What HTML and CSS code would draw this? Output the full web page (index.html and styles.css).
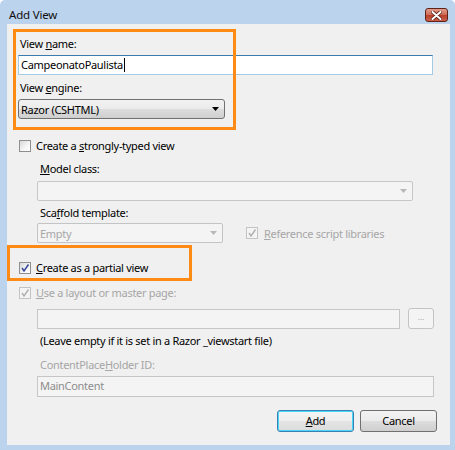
FILE: index.html
```html
<!DOCTYPE html>
<html>
<head>
<meta charset="utf-8">
<link rel="stylesheet" href="styles.css">
</head>
<body>
<div class="window">
  <div class="titlebar">
    <span class="title">Add View</span>
    <span class="close"><svg width="11" height="9" viewBox="0 0 11 9"><path d="M1.5 1 L9.5 8 M9.5 1 L1.5 8" stroke="#5a1d12" stroke-width="3.6" stroke-linecap="round"/><path d="M1.5 1 L9.5 8 M9.5 1 L1.5 8" stroke="#fff" stroke-width="2" stroke-linecap="round"/></svg></span>
  </div>
  <div class="client">
    <div class="label">View <u>n</u>ame:</div>
    <div class="textbox focused name mt4">CampeonatoPaulista<span class="caret"></span></div>
    <div class="label mt5">View <u>e</u>ngine:</div>
    <div class="dropdown engine mt4"><span>Razor (CSHTML)</span><svg class="arrow" width="7" height="4" viewBox="0 0 7 4"><path d="M0 0 H7 L3.5 4 Z" fill="#000"/></svg></div>

    <div class="check mt19"><span class="box"></span><span>Create a <u>s</u>trongly-typed view</span></div>
    <div class="indent">
      <div class="label mt8"><u>M</u>odel class:</div>
      <div class="combo model mt5"><svg class="arrow" width="7" height="4" viewBox="0 0 7 4"><path d="M0 0 H7 L3.5 4 Z" fill="#b8b8b8"/></svg></div>
      <div class="label mt4">Sca<u>f</u>fold template:</div>
      <div class="row mt3">
        <div class="dropdown disabled scaffold"><span>Empty</span><svg class="arrow" width="7" height="4" viewBox="0 0 7 4"><path d="M0 0 H7 L3.5 4 Z" fill="#b8b8b8"/></svg></div>
        <div class="check disabled refs"><span class="box checked"><svg width="10" height="10" viewBox="0 0 10 10"><path d="M2 5 L4 8 L8.5 1.5" stroke="#b0b0b0" stroke-width="1.4" fill="none"/></svg></span><span><u>R</u>eference script libraries</span></div>
      </div>
    </div>

    <div class="check mt17"><span class="box checked"><svg width="10" height="10" viewBox="0 0 10 10"><path d="M2 5 L4 8 L8.5 1.5" stroke="#36479a" stroke-width="1.5" fill="none"/></svg></span><span><u>C</u>reate as a partial view</span></div>
    <div class="check disabled mt10"><span class="box checked"><svg width="10" height="10" viewBox="0 0 10 10"><path d="M2 5 L4 8 L8.5 1.5" stroke="#b0b0b0" stroke-width="1.4" fill="none"/></svg></span><span><u>U</u>se a layout or master page:</span></div>
    <div class="indent">
      <div class="row mt8">
        <div class="textbox disabled layout"></div>
        <div class="browse">...</div>
      </div>
      <div class="label mt4">(Leave empty if it is set in a Razor _viewstart file)</div>
      <div class="label disabled-text mt9">ContentPlace<u>H</u>older ID:</div>
      <div class="textbox disabled cph mt4">MainContent</div>
    </div>
    <div class="buttons mt13">
      <div class="button default"><u>A</u>dd</div>
      <div class="button">Cancel</div>
    </div>
  </div>
  <div class="highlight hl-top"></div>
  <div class="highlight hl-partial"></div>
</div>
</body>
</html>
```

FILE: styles.css
```css
* { box-sizing: border-box; }
html, body { margin: 0; padding: 0; background: #fff; }
body {
  font-family: "Noto Sans", "Open Sans", sans-serif;
  font-size: 11px;
  letter-spacing: -0.3px;
  color: #000;
}
.window {
  position: relative;
  width: 455px;
  height: 450px;
  background: #bcd3ee;
  border-radius: 5px 5px 0 0;
  overflow: hidden;
}
.titlebar {
  height: 24px;
  display: flex;
  justify-content: space-between;
  align-items: flex-start;
}
.title {
  margin: 7px 0 0 9px;
  font-size: 11.5px;
  letter-spacing: -0.2px;
  line-height: 15px;
  color: #0f0f0f;
}
.close {
  margin: 8px 7px 0 0;
  width: 23px;
  height: 14px;
  border: 1px solid #5e2219;
  border-radius: 3px;
  background: linear-gradient(#e39d8b, #cf6b56 48%, #b9402b 52%, #c9604a);
  display: flex;
  align-items: center;
  justify-content: center;
}
.client {
  margin-left: 7px;
  width: 443px;
  height: 421px;
  background: #f0f0f0;
  padding: 12px 0 0 11px;
}
.mt3 { margin-top: 3px; }
.mt4 { margin-top: 4px; }
.mt5 { margin-top: 5px; }
.mt8 { margin-top: 8px; }
.mt9 { margin-top: 9px; }
.mt10 { margin-top: 10px; }
.mt13 { margin-top: 13px; }
.mt17 { margin-top: 17px; }
.mt19 { margin-top: 19px; }
.label {
  height: 15px;
  line-height: 15px;
  padding-left: 2px;
  white-space: nowrap;
}
.indent { margin-left: 19px; }
.indent .label { padding-left: 3px; }
.disabled-text { color: #a6a6a6; }
u { text-underline-offset: 1px; }

.textbox {
  height: 20px;
  border: 1px solid #abadb3;
  border-top-color: #e3e9ef;
  background: #fff;
  line-height: 18px;
  padding-left: 2px;
  white-space: nowrap;
}
.textbox.focused {
  border-color: #a6cbe6;
  border-top-color: #3d7bad;
}
.textbox.name { width: 415px; }
.caret {
  display: inline-block;
  width: 1px;
  height: 14px;
  margin-left: 1px;
  background: #000;
  vertical-align: -3px;
}
.textbox.disabled {
  background: #f4f4f4;
  border-color: #c6c6c6;
  color: #8d8d8d;
}
.textbox.layout { width: 363px; }
.textbox.cph { width: 397px; height: 21px; }

.dropdown {
  height: 20px;
  border: 1px solid #707070;
  border-radius: 3px;
  background: linear-gradient(#f2f2f2, #ebebeb 50%, #dddddd 51%, #cfcfcf);
  display: flex;
  align-items: center;
  justify-content: space-between;
  padding: 0 5px 0 2px;
}
.dropdown.engine { width: 207px; }
.dropdown.disabled {
  border-color: #c2c4c6;
  border-radius: 2px;
  background: #f4f4f4;
  color: #a6a6a6;
}
.dropdown.scaffold { width: 186px; }
.arrow { flex: none; }
.combo {
  height: 20px;
  border: 1px solid #c6c6c6;
  border-radius: 2px;
  background: #f4f4f4;
  display: flex;
  align-items: center;
  justify-content: flex-end;
  padding-right: 5px;
}
.combo.model { width: 376px; }

.check {
  height: 15px;
  display: flex;
  align-items: center;
  gap: 5px;
  white-space: nowrap;
}
.box {
  margin-left: 1px;
  width: 12px;
  height: 12px;
  border: 1px solid #8e8f8f;
  background: linear-gradient(135deg, #d8d8d8, #f6f6f6 60%, #fff);
  display: flex;
  align-items: center;
  justify-content: center;
  flex: none;
}
.check.disabled { color: #a6a6a6; }
.check.disabled .box {
  border-color: #c4c4c4;
  background: #f4f4f4;
}
.row {
  display: flex;
  align-items: center;
}
.refs { margin-left: 22px; gap: 6px; }
.browse {
  margin-left: 8px;
  width: 26px;
  height: 21px;
  border: 1px solid #c4c4c4;
  border-radius: 3px;
  background: #f4f4f4;
  color: #b0b0b0;
  font-size: 9px;
  text-align: center;
  line-height: 16px;
}
.buttons {
  display: flex;
  justify-content: flex-end;
  gap: 6px;
  padding-right: 13px;
}
.button {
  width: 77px;
  height: 22px;
  border: 1px solid #707070;
  border-radius: 3px;
  background: linear-gradient(#f2f2f2, #ebebeb 50%, #dddddd 51%, #cfcfcf);
  text-align: center;
  line-height: 20px;
}
.button.default {
  border-color: #3c7fb1;
  box-shadow: inset 0 0 0 1px #48d7fb;
  background: linear-gradient(#f4f4f4, #eeeeee 50%, #e4e4e4 51%, #dcdcdc);
}
.highlight {
  position: absolute;
  border: 3px solid #ff8a14;
}
.hl-top { left: 13px; top: 29px; width: 223px; height: 101px; }
.hl-partial { left: 7px; top: 245px; width: 185px; height: 36px; }
```
